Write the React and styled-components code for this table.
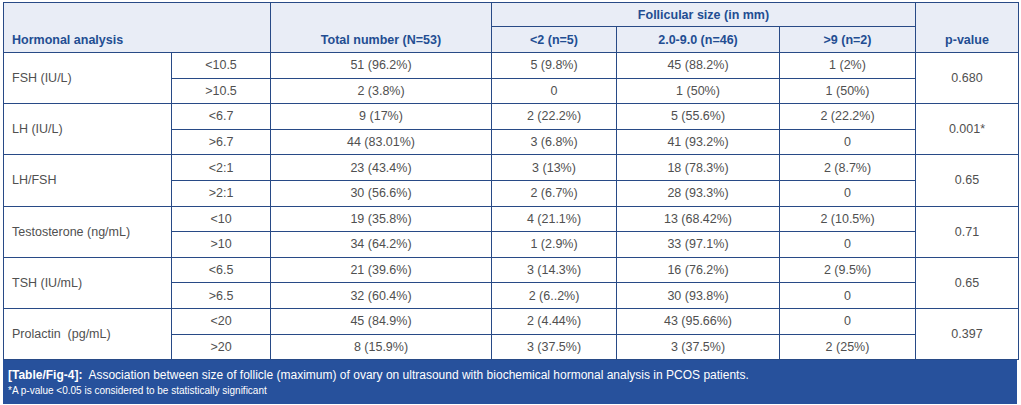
import React from 'react'
import styled, { createGlobalStyle } from 'styled-components'

const GlobalStyle = createGlobalStyle`
  body {
    margin: 0;
    background: #fff;
    font-family: "Liberation Sans", Arial, sans-serif;
  }
`

const groups = [
  { name: 'FSH (IU/L)', p: '0.680', rows: [
    ['<10.5', '51 (96.2%)', '5 (9.8%)', '45 (88.2%)', '1 (2%)'],
    ['>10.5', '2 (3.8%)', '0', '1 (50%)', '1 (50%)'],
  ] },
  { name: 'LH (IU/L)', p: '0.001*', rows: [
    ['<6.7', '9 (17%)', '2 (22.2%)', '5 (55.6%)', '2 (22.2%)'],
    ['>6.7', '44 (83.01%)', '3 (6.8%)', '41 (93.2%)', '0'],
  ] },
  { name: 'LH/FSH', p: '0.65', rows: [
    ['<2:1', '23 (43.4%)', '3 (13%)', '18 (78.3%)', '2 (8.7%)'],
    ['>2:1', '30 (56.6%)', '2 (6.7%)', '28 (93.3%)', '0'],
  ] },
  { name: 'Testosterone (ng/mL)', p: '0.71', rows: [
    ['<10', '19 (35.8%)', '4 (21.1%)', '13 (68.42%)', '2 (10.5%)'],
    ['>10', '34 (64.2%)', '1 (2.9%)', '33 (97.1%)', '0'],
  ] },
  { name: 'TSH (IU/mL)', p: '0.65', rows: [
    ['<6.5', '21 (39.6%)', '3 (14.3%)', '16 (76.2%)', '2 (9.5%)'],
    ['>6.5', '32 (60.4%)', '2 (6..2%)', '30 (93.8%)', '0'],
  ] },
  { name: 'Prolactin\u00a0 (pg/mL)', p: '0.397', rows: [
    ['<20', '45 (84.9%)', '2 (4.44%)', '43 (95.66%)', '0'],
    ['>20', '8 (15.9%)', '3 (37.5%)', '3 (37.5%)', '2 (25%)'],
  ] },
]

const widths = [168, 99, 221, 125, 163, 136, 103]

const App = () => {
  return (
    <Page>
      <GlobalStyle />
      <Table>
        <colgroup>
          {widths.map((w, i) => <col key={i} style={{ width: w }} />)}
        </colgroup>
        <thead>
          <Row $h={24}>
            <Th colSpan={2} rowSpan={2} $align="left">Hormonal analysis</Th>
            <Th rowSpan={2}>Total number (N=53)</Th>
            <Th colSpan={3} $top>Follicular size (in mm)</Th>
            <Th rowSpan={2}>p-value</Th>
          </Row>
          <Row $h={26}>
            <Th $sub>&lt;2 (n=5)</Th>
            <Th $sub>2.0-9.0 (n=46)</Th>
            <Th $sub>&gt;9 (n=2)</Th>
          </Row>
        </thead>
        <tbody>
          {groups.map(g => g.rows.map((r, i) => (
            <Row key={g.name + i} $h={25.6}>
              {i === 0 && <Label rowSpan={2}>{g.name}</Label>}
              {r.map((v, j) => <Td key={j}>{v}</Td>)}
              {i === 0 && <Td rowSpan={2}>{g.p}</Td>}
            </Row>
          )))}
        </tbody>
      </Table>
      <Caption>
        <CaptionMain><b>[Table/Fig-4]:</b>&nbsp; Association between size of follicle (maximum) of ovary on ultrasound with biochemical hormonal analysis in PCOS patients.</CaptionMain>
        <CaptionNote>*A p-value &lt;0.05 is considered to be statistically significant</CaptionNote>
      </Caption>
    </Page>
  )
}

export default App

// STYLES
const Page = styled.div`
  width: 1015px;
  padding: 2px 3px 0 3px;
`

const Table = styled.table`
  width: 1015px;
  table-layout: fixed;
  border-collapse: collapse;
  font-size: 12.5px;

  td, th {
    border: 1px solid #284a86;
  }
`

const Row = styled.tr`
  height: ${p => p.$h}px;
`

const Th = styled.th`
  background: #e9edf6;
  color: #234d92;
  font-weight: bold;
  font-size: 12.5px;
  line-height: 14px;
  text-align: ${p => p.$align || 'center'};
  vertical-align: ${p => p.$top ? 'middle' : 'bottom'};
  padding: ${p => p.$align ? '0 0 5px 8px' : p.$top ? '0' : '0 0 5px 0'};
  white-space: nowrap;
`

const Td = styled.td`
  color: #505050;
  text-align: center;
  vertical-align: middle;
  line-height: 14px;
  padding: 0;
  white-space: nowrap;
`

const Label = styled(Td)`
  text-align: left;
  padding-left: 8px;
`

const Caption = styled.div`
  background: #27519c;
  color: #fff;
  width: 1014px;
  height: 44px;
  box-sizing: border-box;
  padding: 6px 0 0 5px;
`

const CaptionMain = styled.div`
  font-size: 12px;
  line-height: 18px;
`

const CaptionNote = styled.div`
  font-size: 10px;
  line-height: 14px;
`
